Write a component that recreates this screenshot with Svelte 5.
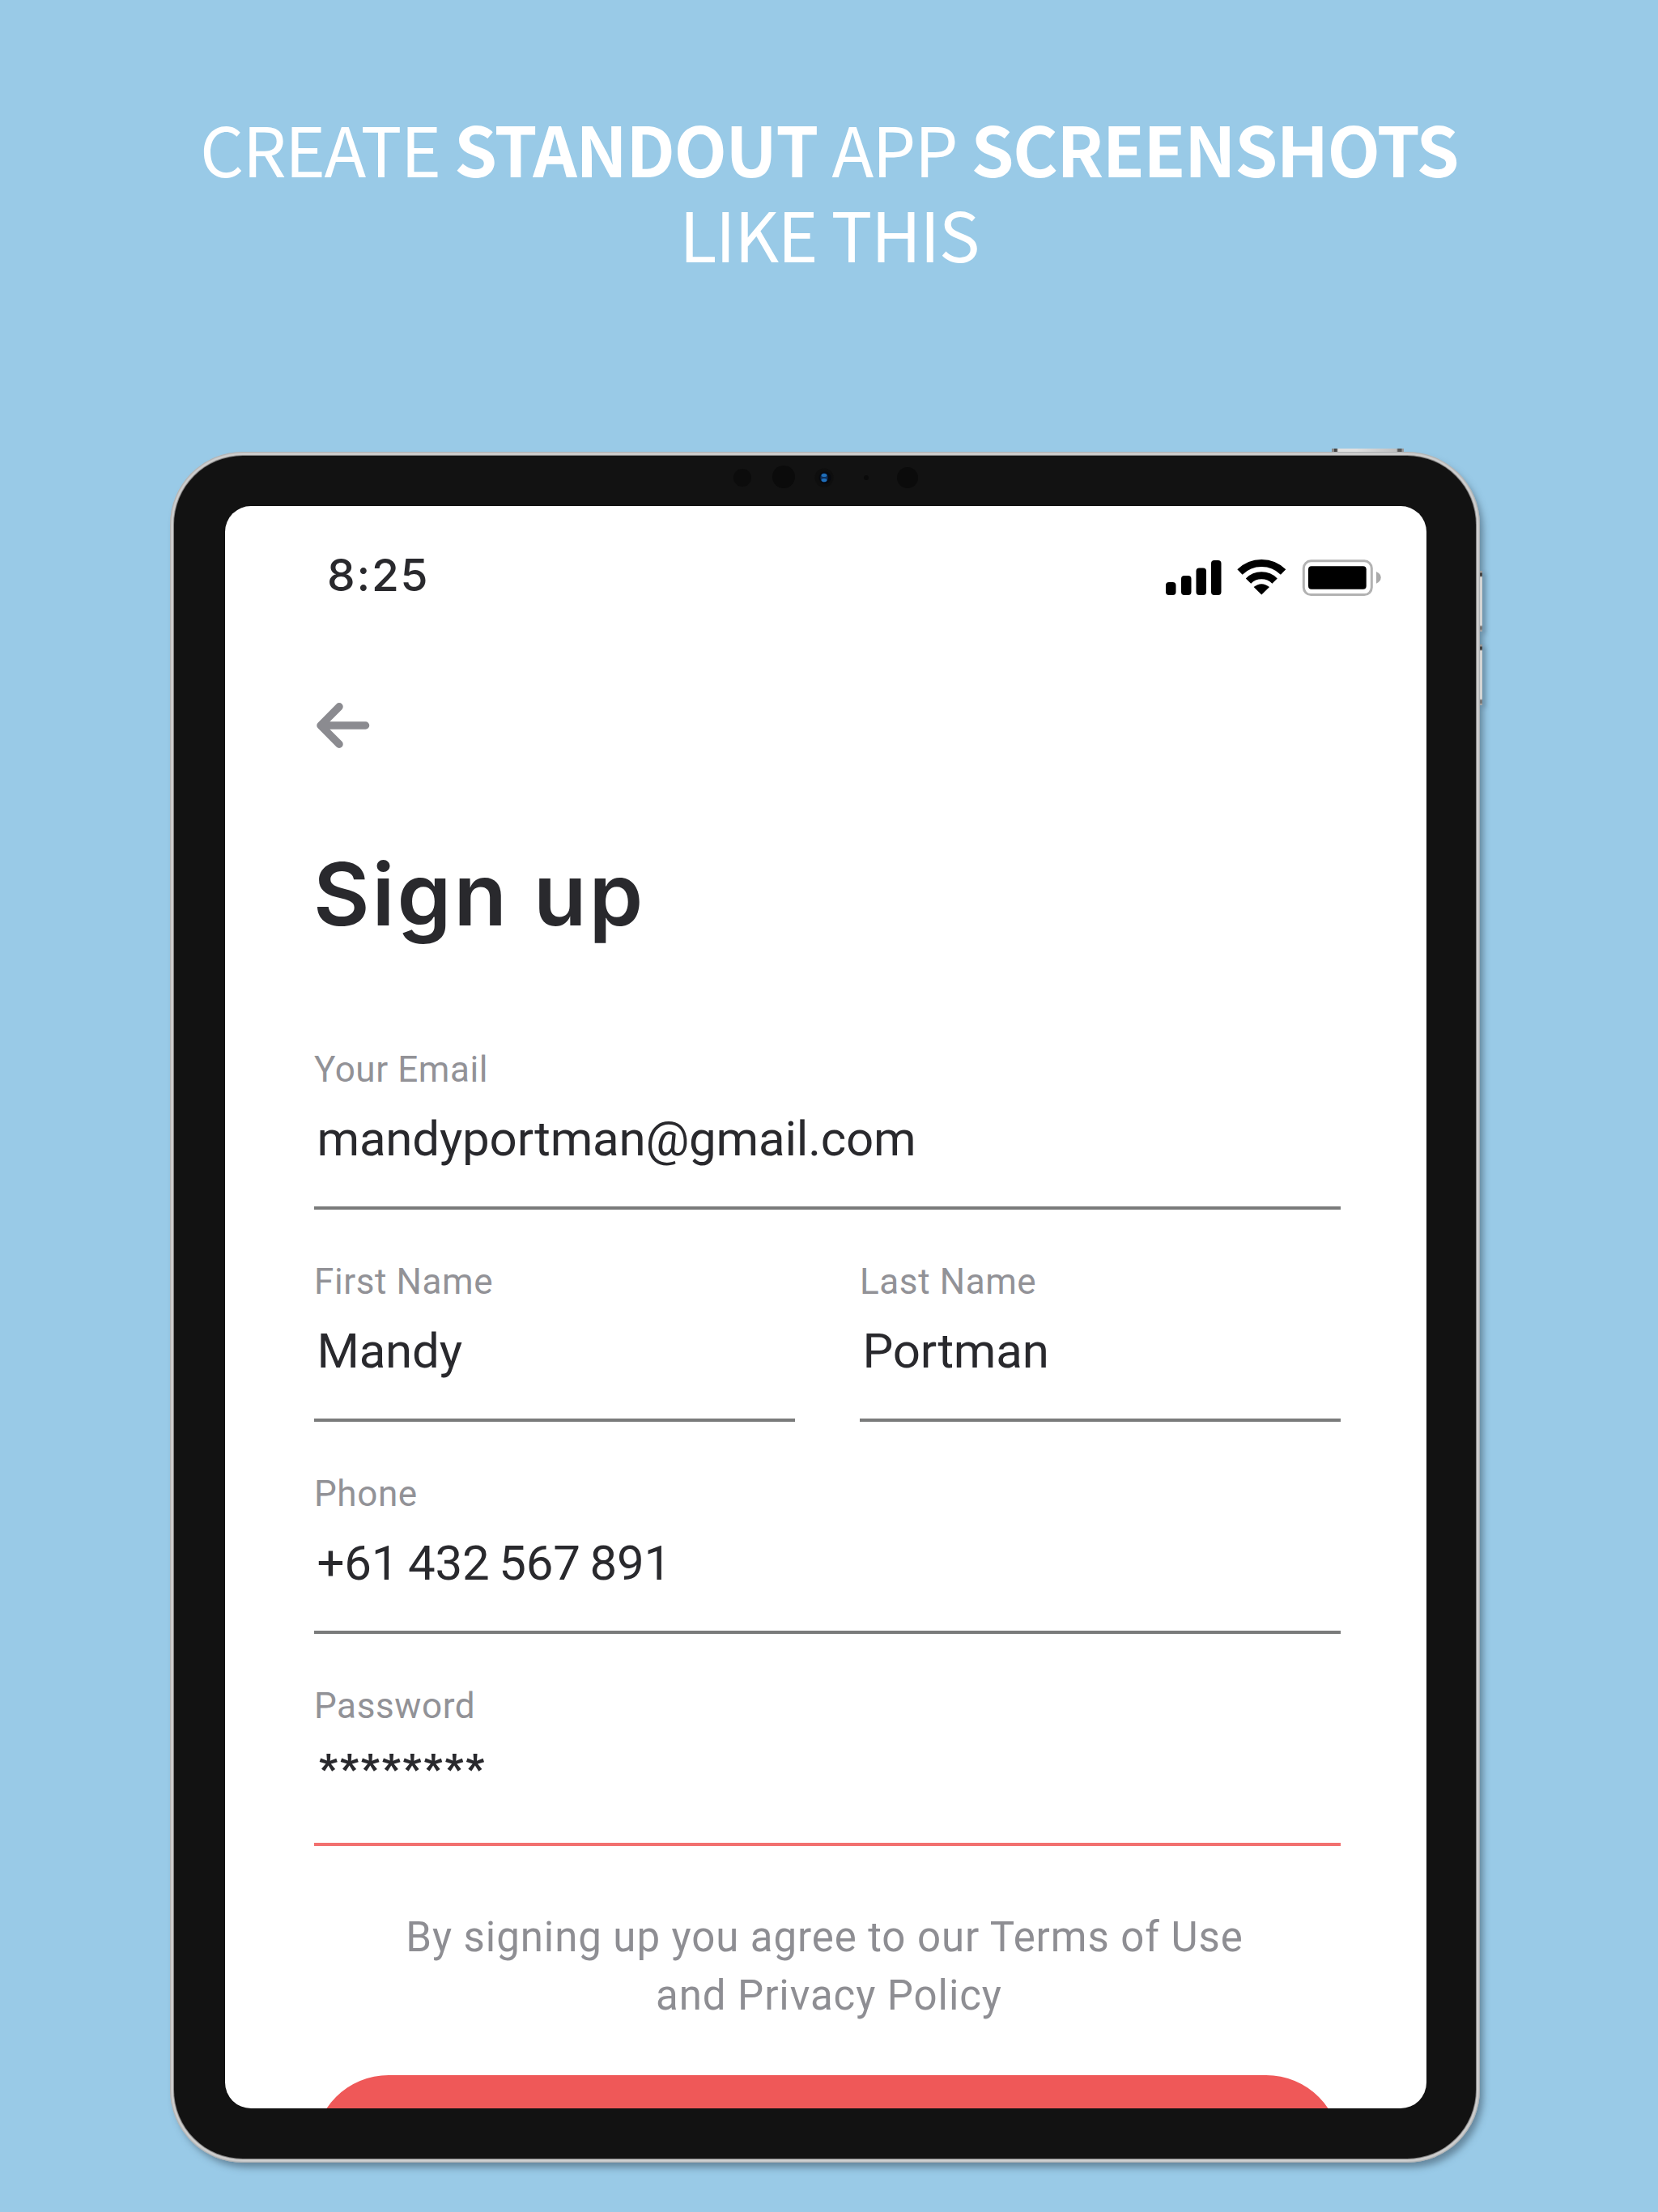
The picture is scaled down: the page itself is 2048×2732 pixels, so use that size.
<script>
  const rows = [
    [{ label: 'Your Email', value: 'mandyportman@gmail.com', kind: 'email' }],
    [
      { label: 'First Name', value: 'Mandy', kind: 'first' },
      { label: 'Last Name', value: 'Portman', kind: 'last' }
    ],
    [{ label: 'Phone', value: '+61 432 567 891', kind: 'phone' }],
    [{ label: 'Password', value: '********', kind: 'password' }]
  ];
</script>

<main class="poster">
  <h1 class="headline">
    <span>CREATE <b>STANDOUT</b> APP <b>SCREENSHOTS</b></span>
    <span>LIKE THIS</span>
  </h1>

  <div class="tablet">
    <i class="key power"></i>
    <i class="key volume up"></i>
    <i class="key volume down"></i>
    <svg class="sensors" viewBox="0 0 240 36">
      <circle cx="17" cy="18" r="11" fill="#0c0c0c" />
      <circle cx="68" cy="17" r="14" fill="#0b0b0b" />
      <circle cx="118" cy="18" r="11.5" fill="#0e0e0e" />
      <circle cx="119" cy="18" r="7.5" fill="#07090f" />
      <ellipse cx="118" cy="18" rx="4.6" ry="5.8" fill="#0d2f5c" />
      <ellipse cx="118" cy="15" rx="3.4" ry="2" fill="#1f6fba" />
      <ellipse cx="118" cy="21" rx="3.4" ry="2" fill="#1f6fba" />
      <circle cx="170" cy="18" r="3" fill="#0a0a0a" />
      <circle cx="221" cy="18" r="13" fill="#0b0b0b" />
    </svg>

    <div class="bezel">
      <section class="screen">
        <div class="status">
          <span class="time">8:25</span>
          <svg class="indicators" viewBox="0 0 270 52">
            <rect x="0" y="31" width="12.5" height="16" rx="4" />
            <rect x="19" y="23" width="12.5" height="24" rx="4" />
            <rect x="37.5" y="13.5" width="12.5" height="33.5" rx="4" />
            <rect x="56" y="4" width="12.5" height="43" rx="4" />
            <path class="arc" d="M91.5 18.5A38 38 0 0 1 145.1 18.5" />
            <path class="arc" d="M102 29.6A23 23 0 0 1 134.6 29.6" />
            <path d="M108.6 37Q118.3 29.4 128 37L118.3 46.5Z" />
            <rect class="shell" x="170.3" y="4.8" width="84" height="41.8" rx="9" />
            <rect x="176" y="11.3" width="71.7" height="28.4" rx="4" />
            <path class="nub" d="M260 18Q265.7 20.5 265.7 25.3T260 32.7Z" />
          </svg>
        </div>

        <svg class="back" viewBox="0 0 66 56">
          <path d="M28 4.8L5 28L28 51.2M5 28H60.5" />
        </svg>

        <h2 class="title">Sign up</h2>

        <form class="form">
          {#each rows as row}
            <div class="row">
              {#each row as field}
                <div class="field {field.kind}">
                  <span class="label">{field.label}</span>
                  <span class="value">{field.value}</span>
                </div>
              {/each}
            </div>
          {/each}
        </form>

        <p class="terms">
          <span class="agree">By signing up you agree to our Terms of Use</span>
          <span>and Privacy Policy</span>
        </p>
        <div class="submit"></div>
      </section>
    </div>
  </div>
</main>

<style>
  :global(body) {
    background: #99cae7;
  }
  .poster {
    width: 2048px;
    height: 2732px;
    overflow: hidden;
    display: flex;
    flex-direction: column;
    background: #99cae7;
  }
  .headline {
    height: 428px;
    margin: 0;
    padding-top: 130px;
    color: #fff;
    font: 400 85px/104.5px 'Noto Sans CJK SC', 'Open Sans', sans-serif;
    letter-spacing: -1.55px;
    text-align: center;
  }
  .headline span {
    display: block;
  }
  .headline b {
    font-weight: 700;
  }
  .tablet {
    position: relative;
    box-sizing: border-box;
    flex: none;
    width: 1618px;
    height: 2113px;
    margin-left: 210px;
    padding: 5px;
    border-radius: 90px;
    background: #d2d2d2;
    box-shadow:
      inset 0 0 2px 1px #a5a9ab,
      5px 7px 8px -1px rgba(50, 70, 85, 0.5);
  }
  .bezel {
    box-sizing: border-box;
    height: 100%;
    padding: 62px 61px 62px 63px;
    border-radius: 85px;
    background: #121212;
    box-shadow: 0 0 1px 1px #777;
  }
  .sensors {
    position: absolute;
    left: 690px;
    top: 14px;
    width: 240px;
    height: 36px;
  }
  .key {
    position: absolute;
    background: #d0d2d3;
  }
  .power {
    top: -4px;
    left: 1435px;
    width: 89px;
    height: 4px;
    background: linear-gradient(90deg, #888 0 3px, #444 3px 6px, #e0e0e0 8px 30px, #bfc0c1 80px, #555 82px 86px, #999 87px);
  }
  .volume {
    right: -3px;
    width: 3px;
    height: 75px;
    background: linear-gradient(#999 0 2px, #444 3px 6px, #d5d5d5 8px 67px, #777 69px 72px, #aaa 74px);
    box-shadow: 4px 3px 5px rgba(50, 70, 85, 0.35);
  }
  .up {
    top: 147px;
  }
  .down {
    top: 238px;
  }
  .screen {
    box-sizing: border-box;
    height: 100%;
    overflow: hidden;
    padding: 49px 106px 0 110px;
    display: flex;
    flex-direction: column;
    border-radius: 32px;
    background: #fff;
    font-family: Roboto, 'Liberation Sans', sans-serif;
    color: #29292d;
  }
  .screen > * {
    flex: none;
  }
  .status {
    height: 80px;
    margin: 0 -54px 0 16px;
    display: flex;
    justify-content: space-between;
    align-items: flex-start;
  }
  .time {
    font: 450 55px/72px Inter, sans-serif;
    letter-spacing: 1.8px;
  }
  .indicators {
    width: 270px;
    height: 52px;
    margin-top: 14px;
  }
  .arc {
    fill: none;
    stroke: #000;
    stroke-width: 9;
  }
  .shell {
    fill: none;
    stroke: #b2b2b2;
    stroke-width: 3;
  }
  .nub {
    fill: #aaa;
  }
  .back {
    width: 66px;
    height: 56px;
    margin: 114px 0 0 2.5px;
  }
  .back path {
    fill: none;
    stroke: #8b8b90;
    stroke-width: 9.5;
    stroke-linecap: round;
    stroke-linejoin: round;
  }
  .title {
    margin: 116px 0 127px -1px;
    font-family: Inter, sans-serif;
    font-size: 107px;
    font-weight: 600;
    line-height: 128px;
    letter-spacing: 3px;
  }
  .form {
    display: flex;
    flex-direction: column;
    gap: 63px;
  }
  .row {
    display: flex;
    gap: 80px;
  }
  .field {
    flex: 1;
    display: flex;
    flex-direction: column;
    padding-bottom: 48px;
    border-bottom: 4px solid #7a7b7b;
  }
  .label {
    font-size: 44px;
    line-height: 52px;
    color: #929297;
    letter-spacing: 0.6px;
  }
  .value {
    margin: 25px 0 0 3.5px;
    font-size: 60px;
    line-height: 70px;
    letter-spacing: -0.2px;
    white-space: pre;
  }
  .phone .value {
    word-spacing: -3px;
  }
  .password {
    padding-bottom: 64px;
    border-color: #f2706f;
  }
  .password .value {
    margin-left: 6px;
    font-size: 50px;
    font-weight: 800;
    line-height: 54px;
    letter-spacing: 2.9px;
  }
  .terms {
    margin: 77px -4px 62px 0;
    font-size: 51px;
    line-height: 72px;
    letter-spacing: 0.92px;
    text-align: center;
    white-space: nowrap;
    color: #8e8e93;
  }
  .terms span {
    display: block;
  }
  .terms .agree {
    padding-right: 11px;
  }
  .submit {
    height: 184px;
    border-radius: 92px;
    background: #ef5858;
  }
</style>
